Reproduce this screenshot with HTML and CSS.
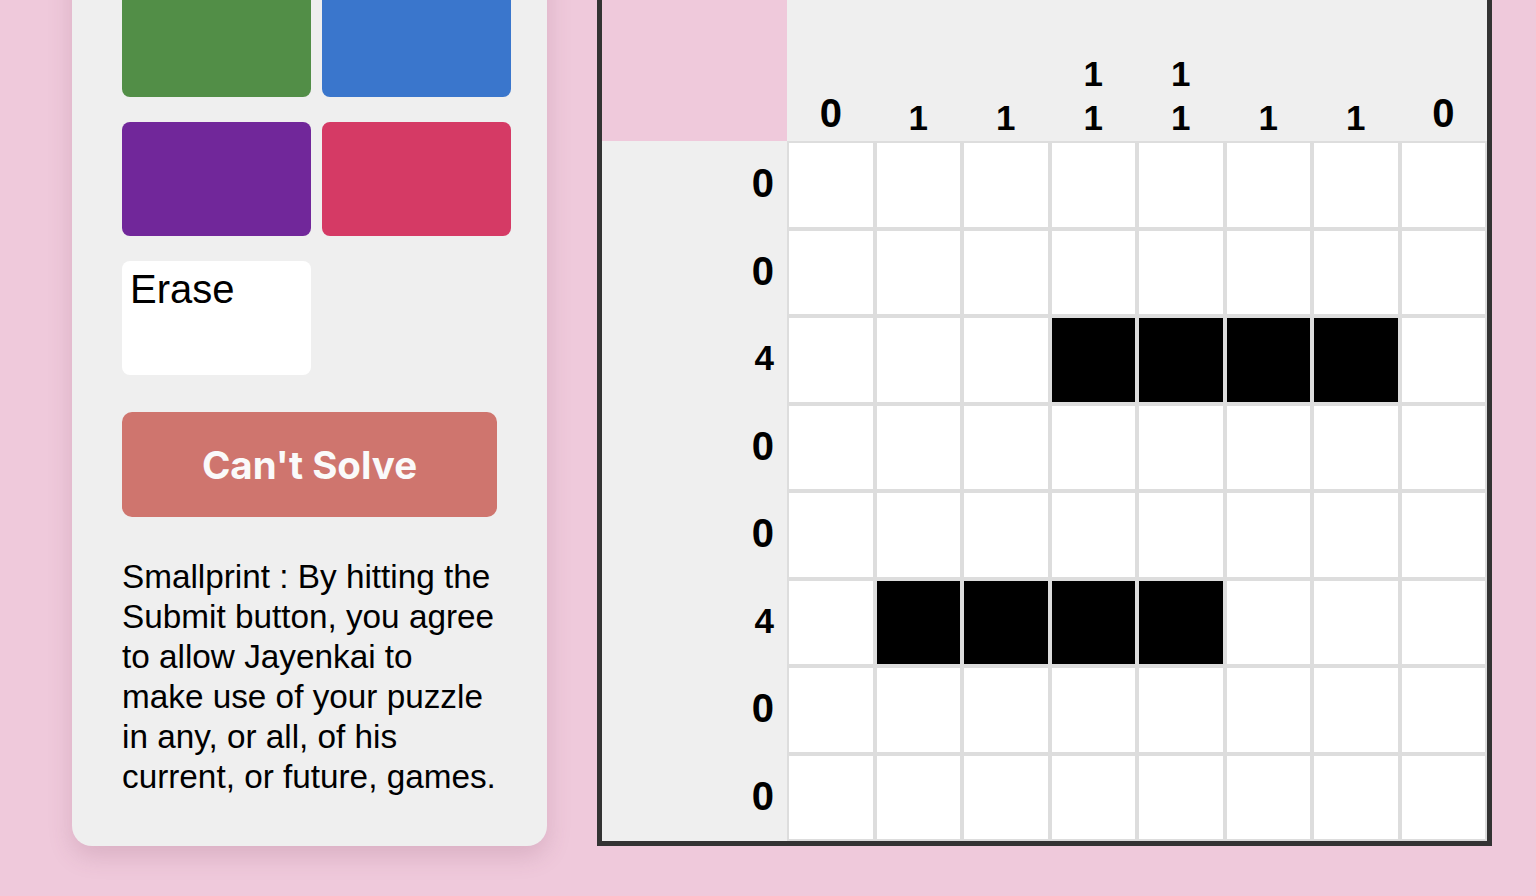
FILE: index.html
```html
<!DOCTYPE html>
<html lang="en">
<head>
  <meta charset="UTF-8">
  <meta name="viewport" content="width=device-width, initial-scale=1.0">
  <title>Nonogram Maker</title>
  <link rel="stylesheet" href="styles.css">
</head>
<body>

<div class="page">
  <div class="panel">
    <div class="swatches">
      <div class="swatch green"></div>
      <div class="swatch blue"></div>
      <div class="swatch purple"></div>
      <div class="swatch red"></div>
      <div class="swatch erase">Erase</div>
    </div>

    <button class="cant-solve">Can't Solve</button>

    <p class="smallprint">Smallprint : By hitting the Submit button, you agree to allow Jayenkai to make use of your puzzle in any, or all, of his current, or future, games.</p>
  </div>

  <div class="board">
    <div class="puzzle" id="puzzle"></div>
  </div>
</div>

<script>
  var colClues = [[0], [1], [1], [1, 1], [1, 1], [1], [1], [0]];
  var rowClues = [0, 0, 4, 0, 0, 4, 0, 0];
  var filled = [
    "........",
    "........",
    "...####.",
    "........",
    "........",
    ".####...",
    "........",
    "........"
  ];

  function clueHtml(n) {
    return "<div class='clue" + (n == 0 ? " zero" : "") + "'>" + n + "</div>";
  }

  var html = "<div class='corner'></div>";

  // column clues along the top
  for (var c = 0; c < 8; c++) {
    html += "<div class='col-clue'>";
    for (var k = 0; k < colClues[c].length; k++) {
      html += clueHtml(colClues[c][k]);
    }
    html += "</div>";
  }

  // each row: clue then 8 cells
  for (var r = 0; r < 8; r++) {
    html += "<div class='row-clue'>" + clueHtml(rowClues[r]) + "</div>";
    for (var j = 0; j < 8; j++) {
      html += "<div class='cell" + (filled[r][j] == "#" ? " on" : "") + "'></div>";
    }
  }

  document.getElementById("puzzle").innerHTML = html;
</script>

</body>
</html>
```

FILE: styles.css
```css
body {
    margin: 0;
    background-color: #efc9db;
    font-family: "Liberation Sans", Arial, sans-serif;
    color: #000;
}

.page {
    display: flex;
    align-items: flex-start;
    gap: 50px;
    padding-left: 72px;
    padding-bottom: 60px;
    margin-top: -60px;
}

/* left tool panel */
.panel {
    width: 475px;
    height: 906px;
    box-sizing: border-box;
    padding: 43px 50px 40px 50px;
    background-color: #efefef;
    border-radius: 20px;
    box-shadow: 0 10px 24px rgba(120, 60, 90, 0.18);
}

.swatches {
    display: grid;
    grid-template-columns: 189px 189px;
    grid-auto-rows: 114px;
    column-gap: 11px;
    row-gap: 25px;
}

.swatch {
    border-radius: 8px;
    cursor: pointer;
}

.green { background-color: #528e47; }
.blue { background-color: #3a76cc; }
.purple { background-color: #71279a; }
.red { background-color: #d53a65; }

.erase {
    background-color: #fff;
    font-size: 40px;
    padding: 6px 8px;
}

.cant-solve {
    display: block;
    width: 375px;
    height: 105px;
    margin-top: 37px;
    padding-top: 2px;
    border: none;
    border-radius: 10px;
    background-color: #cf756e;
    color: #fafafa;
    font-family: Inter, "Liberation Sans", sans-serif;
    font-weight: 700;
    font-size: 38.5px;
    cursor: pointer;
}

.smallprint {
    margin: 40px 0 0 0;
    font-size: 33.3px;
    line-height: 40px;
}

/* puzzle board */
.board {
    border: 5px solid #333;
    background-color: #efefef;
}

.puzzle {
    display: grid;
    grid-template-columns: 185px repeat(8, 87.5px);
    grid-template-rows: 196px repeat(8, 87.5px);
}

.corner {
    background-color: #efc9db;
}

.clue {
    font-weight: 700;
    font-size: 35px;
    line-height: 44px;
}

.clue.zero {
    font-size: 40px;
}

.col-clue {
    display: flex;
    flex-direction: column;
    justify-content: flex-end;
    align-items: center;
    padding-bottom: 1px;
}

.col-clue .zero {
    margin-bottom: 5px;
}

.row-clue {
    display: flex;
    align-items: center;
    justify-content: flex-end;
    padding-right: 13px;
    padding-bottom: 3px;
}

.cell {
    box-sizing: border-box;
    border: 2px solid #ddd;
    background-color: #fff;
    cursor: pointer;
}

.cell.on {
    background-color: #000;
}
```
